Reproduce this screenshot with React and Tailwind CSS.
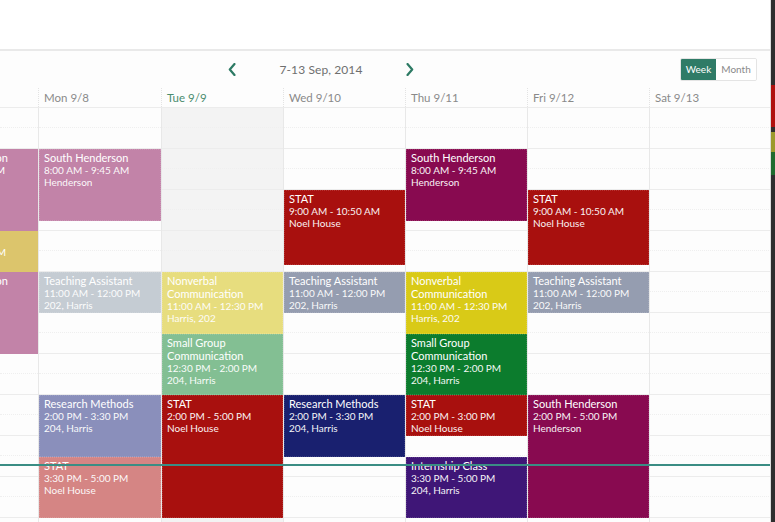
import React from "react";

const START = 7;
const HOUR = 41;

const RED = "#a8100e";

const days = [
  { label: "", w: "w-[38px]", clip: true },
  { label: "Mon 9/8", w: "w-[123px]" },
  { label: "Tue 9/9", w: "w-[122px]", today: true },
  { label: "Wed 9/10", w: "w-[122px]" },
  { label: "Thu 9/11", w: "w-[122px]" },
  { label: "Fri 9/12", w: "w-[122px]" },
  { label: "Sat 9/13", w: "w-[122px]" },
];

const events = [
  // Sunday (clipped)
  [
    { s: 8, e: 10, c: "#c283a8", clip: [["South Henderson", "pr-[30px]", "title"], ["8:00 AM - 9:45 AM", "pr-[33px]", "sub"]] },
    { s: 10, e: 11, c: "#dcc56c", clip: [["", "pr-[30px]", "title"], ["10:00 AM - 11:00 AM", "pr-[32px]", "sub"]] },
    { s: 11, e: 13, c: "#c283a8", clip: [["South Henderson", "pr-[30px]", "title"]] },
  ],
  // Monday
  [
    { s: 8, e: 9.75, c: "#c283a8", t: ["South Henderson"], l: ["8:00 AM - 9:45 AM", "Henderson"] },
    { s: 11, e: 12, c: "#c5ccd3", t: ["Teaching Assistant"], l: ["11:00 AM - 12:00 PM", "202, Harris"] },
    { s: 14, e: 15.5, c: "#8a8fbb", t: ["Research Methods"], l: ["2:00 PM - 3:30 PM", "204, Harris"] },
    { s: 15.5, e: 17, c: "#d58584", t: ["STAT"], l: ["3:30 PM - 5:00 PM", "Noel House"] },
  ],
  // Tuesday
  [
    { s: 11, e: 12.5, c: "#e7dd7e", t: ["Nonverbal", "Communication"], l: ["11:00 AM - 12:30 PM", "Harris, 202"] },
    { s: 12.5, e: 14, c: "#83bf93", t: ["Small Group", "Communication"], l: ["12:30 PM - 2:00 PM", "204, Harris"] },
    { s: 14, e: 17, c: RED, t: ["STAT"], l: ["2:00 PM - 5:00 PM", "Noel House"] },
  ],
  // Wednesday
  [
    { s: 9, e: 10 + 50 / 60, c: RED, t: ["STAT"], l: ["9:00 AM - 10:50 AM", "Noel House"] },
    { s: 11, e: 12, c: "#959db0", t: ["Teaching Assistant"], l: ["11:00 AM - 12:00 PM", "202, Harris"] },
    { s: 14, e: 15.5, c: "#19206f", t: ["Research Methods"], l: ["2:00 PM - 3:30 PM", "204, Harris"] },
  ],
  // Thursday
  [
    { s: 8, e: 9.75, c: "#880a50", t: ["South Henderson"], l: ["8:00 AM - 9:45 AM", "Henderson"] },
    { s: 11, e: 12.5, c: "#d9ca17", t: ["Nonverbal", "Communication"], l: ["11:00 AM - 12:30 PM", "Harris, 202"] },
    { s: 12.5, e: 14, c: "#0c7c2d", t: ["Small Group", "Communication"], l: ["12:30 PM - 2:00 PM", "204, Harris"] },
    { s: 14, e: 15, c: RED, t: ["STAT"], l: ["2:00 PM - 3:00 PM", "Noel House"] },
    { s: 15.5, e: 17, c: "#3f1677", t: ["Internship Class"], l: ["3:30 PM - 5:00 PM", "204, Harris"] },
  ],
  // Friday
  [
    { s: 9, e: 10 + 50 / 60, c: RED, t: ["STAT"], l: ["9:00 AM - 10:50 AM", "Noel House"] },
    { s: 11, e: 12, c: "#959db0", t: ["Teaching Assistant"], l: ["11:00 AM - 12:00 PM", "202, Harris"] },
    { s: 14, e: 17, c: "#880a50", t: ["South Henderson"], l: ["2:00 PM - 5:00 PM", "Henderson"] },
  ],
  // Saturday
  [],
];

function ChevronLeft() {
  return (
    <svg width="8" height="13" viewBox="0 0 8 13" fill="none">
      <path d="M6.5 1 L1.8 6.5 L6.5 12" stroke="#2d7a64" strokeWidth="2.2" strokeLinecap="round" strokeLinejoin="round" />
    </svg>
  );
}
function ChevronRight() {
  return (
    <svg width="8" height="13" viewBox="0 0 8 13" fill="none">
      <path d="M1.5 1 L6.2 6.5 L1.5 12" stroke="#2d7a64" strokeWidth="2.2" strokeLinecap="round" strokeLinejoin="round" />
    </svg>
  );
}

function HourGrid({ today }) {
  const hours = Array.from({ length: 10 });
  return (
    <div className={`flex flex-col ${today ? "bg-[#f3f3f3]" : ""}`}>
      {hours.map((_, i) => (
        <div key={i} className="h-[41px] flex flex-col border-b border-[#ececec]">
          <div className="h-[20px] border-b border-dotted border-[#efefef]" />
          <div className="flex-1" />
        </div>
      ))}
      <div className="h-[4px]" />
    </div>
  );
}

function Event({ ev, clip }) {
  const top = (ev.s - START) * HOUR;
  const height = (ev.e - ev.s) * HOUR;
  if (clip) {
    return (
      <div
        className="absolute left-0 right-0 overflow-hidden text-white"
        style={{ top, height, backgroundColor: ev.c }}
      >
        <div className="pt-[2px]">
          {ev.clip.map(([txt, pr, kind], i) => (
            <div
              key={i}
              className={`flex justify-end whitespace-nowrap ${pr} ${kind === "title" ? "text-[11px] leading-[13px]" : "text-[10px] leading-[12px]"}`}
            >
              <span className="shrink-0">{txt || "\u00a0"}</span>
            </div>
          ))}
        </div>
      </div>
    );
  }
  return (
    <div
      className="absolute left-0 right-0 overflow-hidden text-white pl-[4px] pt-[1px] border border-dotted border-white/15"
      style={{ top, height, backgroundColor: ev.c }}
    >
      {ev.t.map((x, i) => (
        <div key={"t" + i} className="text-[11px] leading-[13px] whitespace-nowrap">{x}</div>
      ))}
      {ev.l.map((x, i) => (
        <div key={"l" + i} className="text-[10px] leading-[12px] whitespace-nowrap opacity-95">{x}</div>
      ))}
    </div>
  );
}

export default function App() {
  return (
    <div
      className="w-[775px] h-[522px] flex overflow-hidden bg-[#fdfdfd]"
      style={{ fontFamily: "Lato, 'Liberation Sans', Arial, sans-serif" }}
    >
      <div className="w-[771px] flex flex-col border-r border-[#dcdcdc]">
        {/* top blank area */}
        <div className="h-[51px] shrink-0 bg-white border-b-2 border-[#e9e9e9]" />

        {/* toolbar */}
        <div className="h-[37px] shrink-0 flex items-center">
          <div className="pl-[228px] flex items-center">
            <ChevronLeft />
            <div className="w-[170px] text-center text-[12px] text-[#6f6f6f] tracking-[0.1px]">7-13 Sep, 2014</div>
            <ChevronRight />
          </div>
          <div className="flex-1" />
          <div className="mr-[13px] flex h-[23px] border border-[#e4e4e4] rounded-[2px] overflow-hidden text-[10px]">
            <div className="w-[35px] bg-[#2f7b67] text-white flex items-center justify-center">Week</div>
            <div className="w-[40px] bg-white text-[#8a8a8a] flex items-center justify-center">Month</div>
          </div>
        </div>

        {/* day header */}
        <div className="h-[20px] shrink-0 flex border-b border-[#ececec]">
          {days.map((d, i) => (
            <div
              key={i}
              className={`${d.w} shrink-0 h-full flex items-center pl-[5px] text-[11.5px] ${i > 0 ? "border-l border-dotted border-[#e3e3e3]" : ""} ${d.today ? "text-[#4a8c6e]" : "text-[#8a8a8a]"}`}
            >
              {d.label}
            </div>
          ))}
        </div>

        {/* body */}
        <div className="relative flex-1 flex overflow-hidden">
          {days.map((d, i) => (
            <div
              key={i}
              className={`${d.w} shrink-0 relative ${i > 0 ? "border-l border-[#e8e8e8]" : ""} ${d.clip ? "overflow-hidden" : ""}`}
            >
              <HourGrid today={d.today} />
              {events[i].map((ev, j) => (
                <Event key={j} ev={ev} clip={d.clip} />
              ))}
            </div>
          ))}
          {/* current time line */}
          <div className="absolute left-0 right-0 top-[356px] h-[1.5px] bg-[#3a8d84]" />
        </div>
      </div>

      {/* right dark strip */}
      <div className="w-[4px] flex flex-col bg-[#2e2e2e]">
        <div className="h-[85px]" />
        <div className="h-[42px] bg-[#b0100e]" />
        <div className="h-[5px]" />
        <div className="h-[20px] bg-[#9c9a2c]" />
        <div className="h-[23px] bg-[#1f6b2e]" />
      </div>
    </div>
  );
}
